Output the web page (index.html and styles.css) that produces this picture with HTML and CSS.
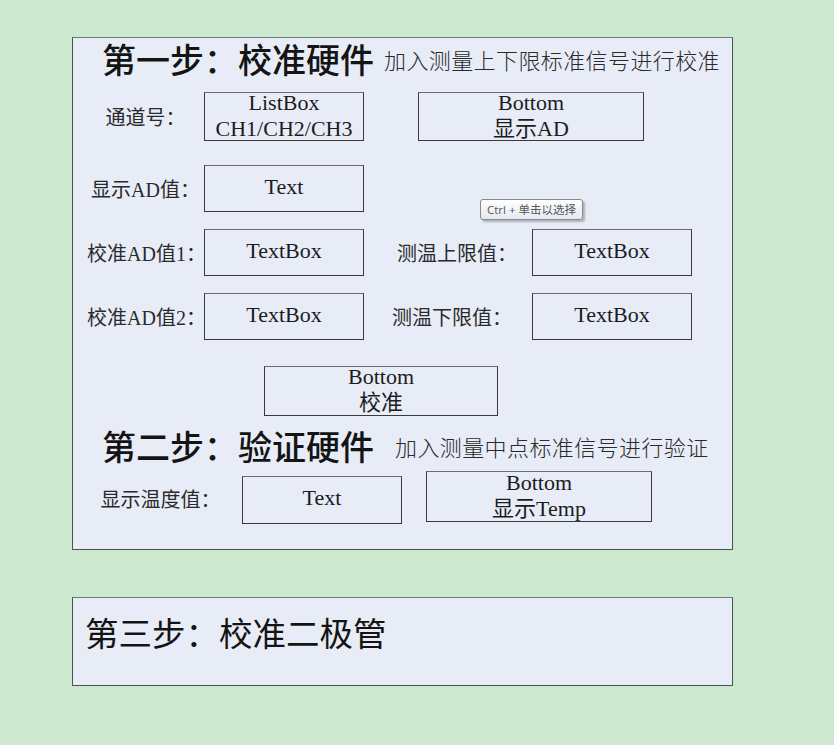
FILE: index.html
```html
<!DOCTYPE html>
<html lang="zh-CN">
<head>
    <meta charset="UTF-8">
    <meta name="viewport" content="width=device-width, initial-scale=1.0">
    <title>校准步骤</title>
    <link rel="stylesheet" href="styles.css">
</head>
<body>
    <!-- 第一、二步 -->
    <div class="panel panel-main">
        <div class="step-head">
            <span class="step-title">第一步：校准硬件</span>
            <span class="step-note">加入测量上下限标准信号进行校准</span>
        </div>

        <div class="row row-channel">
            <span class="label">通道号：</span>
            <div class="box box-two">ListBox<br>CH1/CH2/CH3</div>
            <div class="box box-two box-wide gap-channel">Bottom<br>显示AD</div>
        </div>

        <div class="row row-ad">
            <span class="label">显示AD值：</span>
            <div class="box">Text</div>
        </div>

        <div class="row row-cal">
            <span class="label">校准AD值1：</span>
            <div class="box">TextBox</div>
            <span class="label label-right">测温上限值：</span>
            <div class="box">TextBox</div>
        </div>

        <div class="row row-cal">
            <span class="label">校准AD值2：</span>
            <div class="box">TextBox</div>
            <span class="label label-right label-low">测温下限值：</span>
            <div class="box">TextBox</div>
        </div>

        <div class="row row-btn">
            <div class="box box-two box-calib">Bottom<br>校准</div>
        </div>

        <div class="step-head step-head-2">
            <span class="step-title">第二步：验证硬件</span>
            <span class="step-note note-2">加入测量中点标准信号进行验证</span>
        </div>

        <div class="row row-temp">
            <span class="label label-temp">显示温度值：</span>
            <div class="box box-temp">Text</div>
            <div class="box box-two box-wide gap-temp">Bottom<br>显示Temp</div>
        </div>

        <div class="tooltip">Ctrl + 单击以选择</div>
    </div>

    <!-- 第三步 -->
    <div class="panel panel-diode">
        <div class="step-title step-title-3">第三步：校准二极管</div>
    </div>
</body>
</html>
```

FILE: styles.css
```css
body {
    margin: 0;
    padding: 37px 0 0 72px;
    background-color: #cce8cf;
    color: #1c1c1c;
    font-family: "Liberation Serif", "Noto Sans CJK SC", serif;
}

/* 面板 */
.panel {
    position: relative;
    box-sizing: border-box;
    width: 661px;
    background-color: #e7ecf7;
    border: 1px solid #4c5453;
    border-top-color: #6e7877;
}
.panel-main {
    height: 513px;
}
.panel-diode {
    margin-top: 47px;
    height: 89px;
}

/* 标题 */
.step-head {
    display: flex;
    align-items: center;
    height: 42px;
    padding-left: 29px;
}
.step-head-2 {
    margin-top: 8px;
    height: 44px;
}
.step-title {
    font-family: "Noto Sans CJK SC", sans-serif;
    font-size: 34px;
    font-weight: 500;
    line-height: 1;
    color: #141414;
}
.step-note {
    margin-left: 10px;
    font-family: "Noto Sans CJK SC", sans-serif;
    font-size: 22px;
    font-weight: 300;
    letter-spacing: 0.4px;
    line-height: 1;
    color: #2a2a2a;
}
.note-2 {
    margin-left: 21px;
}
.step-title-3 {
    display: block;
    height: 68px;
    line-height: 68px;
    padding-left: 12px;
    font-size: 33.5px;
    font-weight: 400;
}

/* 行 */
.row {
    display: flex;
    align-items: center;
}
.row-channel {
    margin-top: 12px;
    height: 49px;
}
.row-ad {
    margin-top: 24px;
    height: 47px;
}
.row-cal {
    margin-top: 17px;
    height: 47px;
}
.row-btn {
    margin-top: 26px;
    height: 50px;
}
.row-temp {
    margin-top: 3px;
    height: 53px;
    align-items: flex-start;
}

/* 标签 */
.label {
    box-sizing: border-box;
    width: 131px;
    padding-left: 14px;
    text-align: center;
    font-size: 20px;
    white-space: nowrap;
    color: #2a2a2a;
}
.label-right {
    width: 168px;
    padding-left: 18px;
}
.label-low {
    padding-left: 8px;
}
.label-temp {
    width: 169px;
    padding-left: 6px;
    line-height: 58px;
}

/* 控件框 */
.box {
    box-sizing: border-box;
    width: 160px;
    height: 100%;
    display: flex;
    align-items: center;
    justify-content: center;
    text-align: center;
    font-size: 22px;
    line-height: 24px;
    padding-bottom: 4px;
    border: 1px solid #3a3a3a;
    border-top-color: #6a6d74;
}
.box-two {
    padding-bottom: 2px;
    line-height: 26px;
}
.box-wide {
    width: 226px;
}
.gap-channel {
    margin-left: 54px;
}
.box-calib {
    margin-left: 191px;
    width: 234px;
}
.box-temp {
    margin-top: 5px;
    height: 48px;
}
.gap-temp {
    margin-left: 24px;
    height: 51px;
}

/* 提示 */
.tooltip {
    position: absolute;
    left: 407px;
    top: 161px;
    height: 21px;
    box-sizing: border-box;
    padding: 0 6px;
    font-family: "Open Sans", "Noto Sans CJK SC", sans-serif;
    font-size: 11.5px;
    line-height: 19px;
    color: #575757;
    background: linear-gradient(#ffffff, #e6e8f1);
    border: 1px solid #8a8a8a;
    border-radius: 3px;
    box-shadow: 2px 2px 2px rgba(0, 0, 0, 0.25);
    white-space: nowrap;
}
```
